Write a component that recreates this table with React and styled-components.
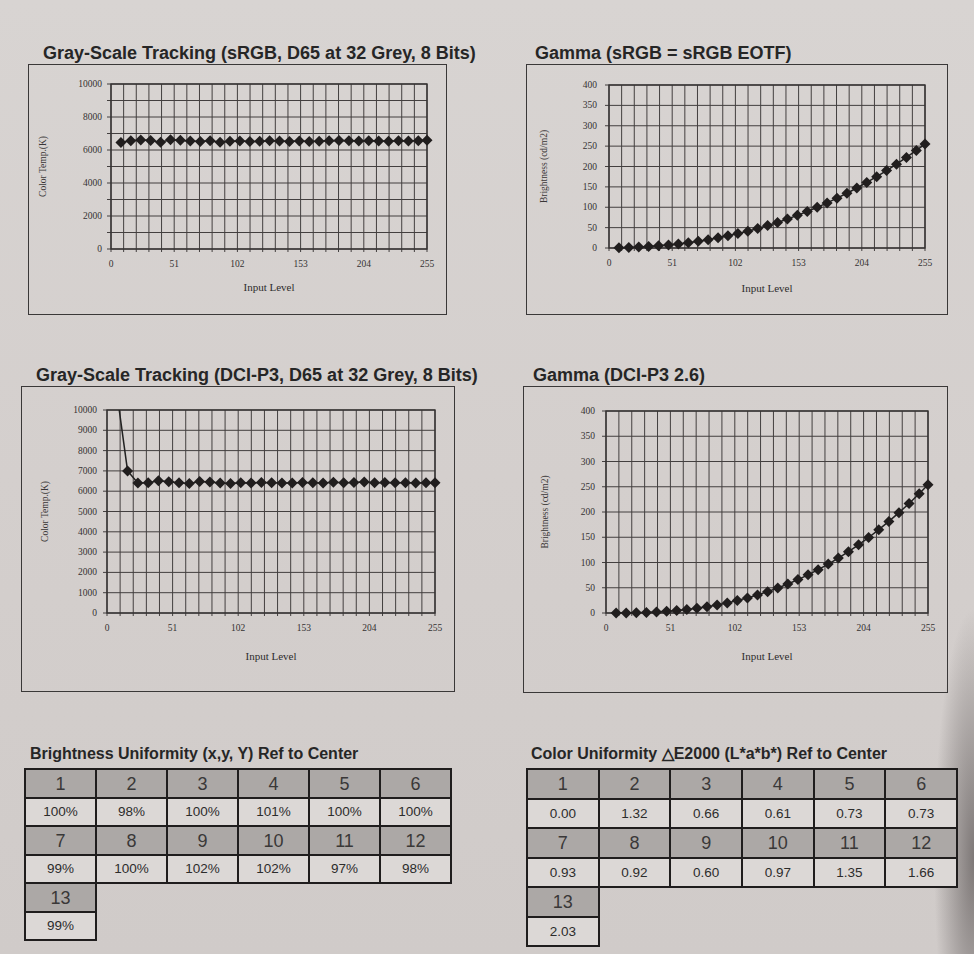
import React from 'react';
import styled, { createGlobalStyle } from 'styled-components';

const GlobalStyle = createGlobalStyle`
  html, body {
    margin: 0;
    padding: 0;
  }
  body {
    background: #d3cfcd;
    font-family: "Liberation Sans", Arial, sans-serif;
    color: #262626;
  }
`;

const Page = styled.div`
  position: relative;
  width: 974px;
  height: 954px;
  overflow: hidden;
  padding-top: 43px;
  box-sizing: border-box;
  background:
    radial-gradient(ellipse 40px 250px at 100% 90%, rgba(70, 64, 64, 0.6), rgba(70, 64, 64, 0) 100%),
    linear-gradient(180deg, #d8d4d2 0%, #d4cfcd 50%, #d0cbc9 100%);
`;

const TwoColumns = styled.div`
  display: grid;
  grid-template-columns: 474px 500px;
  row-gap: ${props => props.$rowGap || 0}px;
  margin-top: ${props => props.$top || 0}px;
`;

const Block = styled.div`
  display: flex;
  flex-direction: column;
`;

const ChartTitle = styled.h2`
  margin: 0 0 1px ${props => props.$indent}px;
  font-size: 18px;
  line-height: 20px;
  font-weight: bold;
  color: #262626;
  white-space: nowrap;
`;

const Frame = styled.div`
  width: ${props => props.$w}px;
  height: ${props => props.$h}px;
  margin-left: ${props => props.$x}px;
  border: 1.5px solid #3a3838;
  box-sizing: border-box;
`;

const ChartSvg = styled.svg`
  display: block;
  overflow: visible;
  font-family: "Liberation Serif", "Times New Roman", serif;
`;

const TableTitle = styled.h3`
  margin: 0 0 5px ${props => props.$indent}px;
  font-size: 16px;
  line-height: 18px;
  font-weight: bold;
  color: #262626;
  white-space: nowrap;
`;

const Grid = styled.table`
  margin-left: ${props => props.$x}px;
  width: ${props => props.$w}px;
  border-collapse: collapse;
  table-layout: fixed;
`;

const Cell = styled.td`
  height: ${props => (props.$head ? props.$hh : props.$vh) - 2}px;
  padding: 0;
  border: 2px solid #1f1d1d;
  text-align: center;
  vertical-align: middle;
  background: ${props => (props.$head ? '#aca8a6' : '#dcd8d6')};
  color: ${props => (props.$head ? '#3a3838' : '#2c2c2c')};
  font-size: ${props => (props.$head ? 18 : 13.5)}px;
  line-height: 1;
`;

const srgb = v => (v <= 0.04045 ? v / 12.92 : Math.pow((v + 0.055) / 1.055, 2.4));
const levels = Array.from({ length: 32 }, (_, i) => Math.min(8 * (i + 1), 255));

const srgbTracking = [6450, 6560, 6600, 6580, 6470, 6620, 6590, 6540, 6520, 6560, 6470, 6530, 6550, 6510, 6530, 6560,
  6540, 6520, 6550, 6510, 6530, 6560, 6570, 6560, 6540, 6560, 6550, 6530, 6560, 6540, 6560, 6590];
const p3Tracking = [10700, 7000, 6400, 6420, 6520, 6470, 6420, 6380, 6480, 6450, 6400, 6380, 6420, 6410, 6430, 6420,
  6400, 6410, 6430, 6420, 6410, 6440, 6420, 6430, 6450, 6420, 6430, 6420, 6420, 6410, 6420, 6420];

const charts = [
  {
    id: 'c1', title: 'Gray-Scale Tracking (sRGB, D65 at 32 Grey, 8 Bits)', indent: 43,
    x: 28, w: 419, h: 251, plot: { l: 82, t: 19, r: 18, b: 64 }, yTitleX: 17, labelGap: 9, xTitleDy: 42,
    yMax: 10000, yLabelStep: 2000, yGridStep: 1000, yTitle: 'Color Temp.(K)',
    data: levels.map((v, i) => [v, srgbTracking[i]]),
  },
  {
    id: 'c2', title: 'Gamma (sRGB = sRGB EOTF)', indent: 61,
    x: 52, w: 422, h: 251, plot: { l: 82, t: 20, r: 21, b: 65 }, yTitleX: 20, labelGap: 12, xTitleDy: 44,
    yMax: 400, yLabelStep: 50, yGridStep: 50, yTitle: 'Brightness (cd/m2)',
    data: levels.map(v => [v, 255 * srgb(v / 255)]),
  },
  {
    id: 'c3', title: 'Gray-Scale Tracking (DCI-P3, D65 at 32 Grey, 8 Bits)', indent: 36,
    x: 21, w: 434, h: 306, plot: { l: 85, t: 23, r: 18, b: 77 }, yTitleX: 26, labelGap: 10, xTitleDy: 47,
    yMax: 10000, yLabelStep: 1000, yGridStep: 1000, yTitle: 'Color Temp.(K)',
    data: levels.map((v, i) => [v, p3Tracking[i]]),
  },
  {
    id: 'c4', title: 'Gamma (DCI-P3 2.6)', indent: 59,
    x: 49, w: 425, h: 307, plot: { l: 82, t: 24, r: 18, b: 78 }, yTitleX: 24, labelGap: 11, xTitleDy: 47,
    yMax: 400, yLabelStep: 50, yGridStep: 50, yTitle: 'Brightness (cd/m2)',
    data: levels.map(v => [v, 254 * Math.pow(v / 255, 2.6)]),
  },
];

// Dibuja un gráfico con rejilla, ejes y serie de diamantes
const Chart = ({ id, w, h, plot, yTitleX, labelGap, xTitleDy, yMax, yLabelStep, yGridStep, yTitle, data }) => {
  const iw = w - 3;
  const ih = h - 3;
  const left = plot.l;
  const top = plot.t;
  const right = iw - plot.r;
  const bottom = ih - plot.b;
  const px = v => left + (v / 255) * (right - left);
  const py = v => bottom - (v / yMax) * (bottom - top);

  const hLines = [];
  for (let v = 0; v <= yMax; v += yGridStep) hLines.push(v);
  const yLabels = [];
  for (let v = 0; v <= yMax; v += yLabelStep) yLabels.push(v);
  const vLines = Array.from({ length: 26 }, (_, i) => left + (i * (right - left)) / 25);
  const xLabels = [0, 51, 102, 153, 204, 255];
  const pts = data.map(([x, y]) => [px(x), py(y)]);

  return (
    <ChartSvg width={iw} height={ih} viewBox={`0 0 ${iw} ${ih}`}>
      <defs>
        <clipPath id={`clip-${id}`}>
          <rect x={left} y={top} width={right - left} height={bottom - top} />
        </clipPath>
      </defs>
      <g stroke="#433f3f" strokeWidth="1">
        {hLines.map(v => (
          <line key={`h${v}`} x1={left - 4} x2={right} y1={py(v)} y2={py(v)} />
        ))}
        {vLines.map((x, i) => (
          <line key={`v${i}`} x1={x} x2={x} y1={top} y2={bottom + 3} />
        ))}
      </g>
      <rect x={left} y={top} width={right - left} height={bottom - top} fill="none" stroke="#353232" strokeWidth="1.4" />
      <g fill="#353232" fontSize="9.5" textAnchor="end">
        {yLabels.map(v => (
          <text key={`yl${v}`} x={left - labelGap} y={py(v) + 3}>{v}</text>
        ))}
      </g>
      <g fill="#353232" fontSize="9.5" textAnchor="middle">
        {xLabels.map(v => (
          <text key={`xl${v}`} x={px(v)} y={bottom + 18}>{v}</text>
        ))}
      </g>
      <text x={(left + right) / 2} y={bottom + xTitleDy} fontSize="11" textAnchor="middle" fill="#2e2c2c">Input Level</text>
      <text
        x={yTitleX}
        y={(top + bottom) / 2}
        fontSize="9.5"
        textAnchor="middle"
        fill="#3a3737"
        transform={`rotate(-90 ${yTitleX} ${(top + bottom) / 2})`}
      >
        {yTitle}
      </text>
      <g clipPath={`url(#clip-${id})`}>
        <polyline points={pts.map(p => p.join(',')).join(' ')} fill="none" stroke="#222" strokeWidth="1.5" />
      </g>
      <g fill="#211e1e">
        {pts
          .filter(([, y]) => y >= top - 1)
          .map(([x, y], i) => (
            <polygon key={i} points={`${x},${y - 5.5} ${x + 5.5},${y} ${x},${y + 5.5} ${x - 5.5},${y}`} />
          ))}
      </g>
    </ChartSvg>
  );
};

const brightness = [
  ['1', '2', '3', '4', '5', '6'],
  ['100%', '98%', '100%', '101%', '100%', '100%'],
  ['7', '8', '9', '10', '11', '12'],
  ['99%', '100%', '102%', '102%', '97%', '98%'],
  ['13'],
  ['99%'],
];

const colorDelta = [
  ['1', '2', '3', '4', '5', '6'],
  ['0.00', '1.32', '0.66', '0.61', '0.73', '0.73'],
  ['7', '8', '9', '10', '11', '12'],
  ['0.93', '0.92', '0.60', '0.97', '1.35', '1.66'],
  ['13'],
  ['2.03'],
];

const UniformityTable = ({ rows, x, w, hh, vh }) => (
  <Grid $x={x} $w={w}>
    <colgroup>
      {[0, 1, 2, 3, 4, 5].map(i => (
        <col key={i} />
      ))}
    </colgroup>
    <tbody>
      {rows.map((row, r) => (
        <tr key={r}>
          {row.map((val, c) => (
            <Cell key={c} $head={r % 2 === 0} $hh={hh} $vh={vh}>{val}</Cell>
          ))}
        </tr>
      ))}
    </tbody>
  </Grid>
);

const App = () => (
  <>
    <GlobalStyle />
    <Page>
      <TwoColumns $rowGap={50}>
        {charts.map(c => (
          <Block key={c.id}>
            <ChartTitle $indent={c.indent}>{c.title}</ChartTitle>
            <Frame $x={c.x} $w={c.w} $h={c.h}>
              <Chart {...c} />
            </Frame>
          </Block>
        ))}
      </TwoColumns>
      <TwoColumns $top={52}>
        <Block>
          <TableTitle $indent={30}>Brightness Uniformity (x,y, Y) Ref to Center</TableTitle>
          <UniformityTable rows={brightness} x={24} w={428} hh={29} vh={28} />
        </Block>
        <Block>
          <TableTitle $indent={57}>Color Uniformity △E2000 (L*a*b*) Ref to Center</TableTitle>
          <UniformityTable rows={colorDelta} x={52} w={432} hh={30} vh={29} />
        </Block>
      </TwoColumns>
    </Page>
  </>
);

export default App;
